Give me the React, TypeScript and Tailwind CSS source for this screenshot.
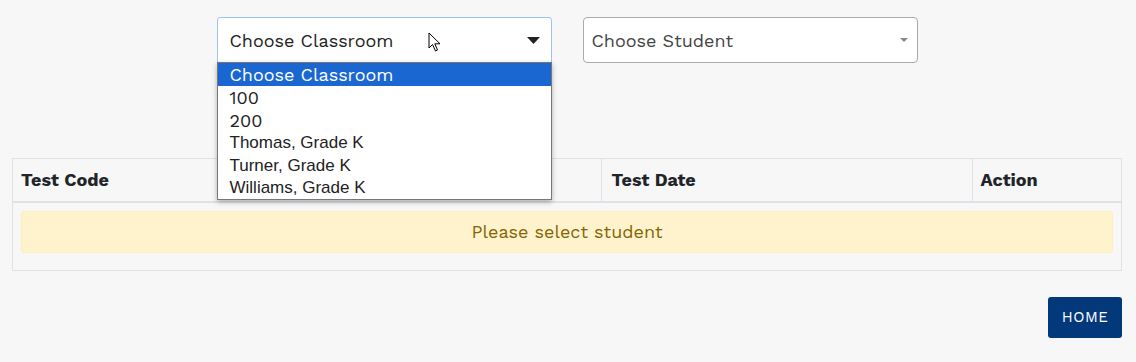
const classrooms = ['100', '200']
const teachers = ['Thomas, Grade K', 'Turner, Grade K', 'Williams, Grade K']

function Cursor() {
  return (
    <svg className="absolute left-[211px] top-[15px]" width="14" height="20" viewBox="0 0 14 20">
      <path d="M1 1 L1 16 L4.5 12.5 L7.5 19 L9.5 18 L6.8 11.8 L12 11.8 Z" fill="#fff" stroke="#000" strokeWidth="1" strokeLinejoin="round" />
    </svg>
  )
}

export default function App() {
  return (
    <div className="min-h-[362px] bg-[#f7f7f7] pl-3 pr-[14px] pt-[17px] font-['Work_Sans','Open_Sans',sans-serif] text-[#212529]">
      <div className="flex justify-center gap-[31px]">
        <div className="relative w-[335px]">
          <div className="flex h-[46px] items-center justify-between rounded-t-[3px] border border-[#9cc3f5] bg-white pl-3 pr-[11px] text-[18px] text-[#222]">
            <span>Choose Classroom</span>
            <svg width="13" height="7" viewBox="0 0 13 7">
              <path d="M0 0 H13 L6.5 7 Z" fill="#222" />
            </svg>
          </div>
          <Cursor />
          <ul className="absolute left-0 top-[45px] z-10 w-full border border-[#777] bg-white shadow-[0_2px_5px_rgba(0,0,0,0.3)]">
            <li className="h-[23px] bg-[#1a67d2] pl-3 text-[18px] leading-[23px] text-white">Choose Classroom</li>
            {classrooms.map((c) => (
              <li key={c} className="h-[22.6px] pl-3 text-[18px] leading-[23px] text-[#222]">{c}</li>
            ))}
            {teachers.map((t) => (
              <li key={t} className="h-[22.6px] pl-3 font-['Liberation_Sans',Arial,sans-serif] text-[17px] leading-[23px] text-[#222]">{t}</li>
            ))}
          </ul>
        </div>
        <div className="flex h-[46px] w-[335px] items-center justify-between rounded-[4px] border border-[#aaa] bg-white pl-2 pr-[9px] text-[18px] text-[#444]">
          <span>Choose Student</span>
          <svg width="8" height="4" viewBox="0 0 8 4">
            <path d="M0 0 H8 L4 4 Z" fill="#888" />
          </svg>
        </div>
      </div>

      <div className="mt-[95px] border border-[#dee2e6]">
        <table className="w-full border-collapse">
          <thead>
            <tr className="h-[43px] border-b-2 border-[#dee2e6] text-left text-[18px] font-bold text-[#212529]">
              <th className="w-[588px] border-r border-[#dee2e6] pb-[2px] pl-[8px]">Test Code</th>
              <th className="w-[371px] border-r border-[#dee2e6] pb-[2px] pl-[10px]">Test Date</th>
              <th className="pb-[2px] pl-2">Action</th>
            </tr>
          </thead>
          <tbody>
            <tr>
              <td colSpan={3} className="px-2 pb-[17px] pt-2">
                <div className="flex h-[42px] items-center justify-center rounded-[3px] border border-[#ffeeba] bg-[#fff3cd] pb-[2px] text-[18px] text-[#856404]">
                  Please select student
                </div>
              </td>
            </tr>
          </tbody>
        </table>
      </div>

      <div className="mt-[26px] flex justify-end">
        <button className="h-[41px] w-[74px] rounded-[3px] bg-[#03387a] text-[15px] tracking-[0.5px] text-white">
          HOME
        </button>
      </div>
    </div>
  )
}
